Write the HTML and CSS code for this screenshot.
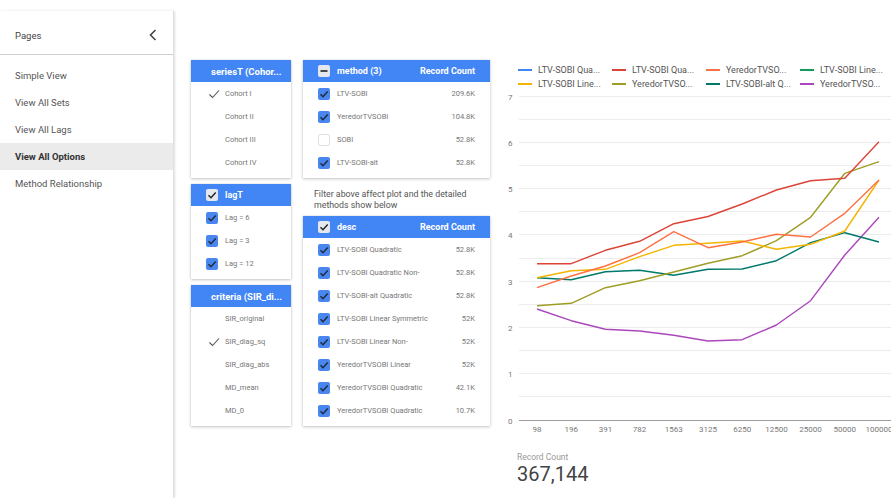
FILE: index.html
```html
<!DOCTYPE html>
<html lang="en">
<head>
<meta charset="utf-8">
<title>View All Options</title>
<link rel="stylesheet" href="styles.css">
</head>
<body>
<div class="page">
  <aside class="sidebar">
    <div class="side-head">
      <span>Pages</span>
      <svg class="chev" width="8" height="12" viewBox="0 0 8 12"><path d="M6.5 1 L1.5 6 L6.5 11" fill="none" stroke="#444" stroke-width="1.6"/></svg>
    </div>
    <nav class="side-nav">
      <a class="nav-item">Simple View</a>
      <a class="nav-item">View All Sets</a>
      <a class="nav-item">View All Lags</a>
      <a class="nav-item active">View All Options</a>
      <a class="nav-item">Method Relationship</a>
    </nav>
  </aside>

  <main class="main">
    <div class="col col-a">
      <section class="panel">
        <header class="ph ph-title">seriesT (Cohor...</header>
        <ul class="rows">
          <li class="row"><span class="tick"><svg width="12" height="12" viewBox="0 0 12 12"><path d="M1.5 6.5 L4.5 9.5 L11 2.5" fill="none" stroke="#555" stroke-width="1.1"/></svg></span><span class="lbl">Cohort I</span></li>
          <li class="row"><span class="tick"></span><span class="lbl">Cohort II</span></li>
          <li class="row"><span class="tick"></span><span class="lbl">Cohort III</span></li>
          <li class="row"><span class="tick"></span><span class="lbl">Cohort IV</span></li>
        </ul>
      </section>

      <section class="panel">
        <header class="ph"><span class="cb cb-head"><svg width="12" height="12" viewBox="0 0 12 12"><path d="M2.5 6.2 L5 8.7 L9.7 3.5" fill="none" stroke="#222" stroke-width="1.4"/></svg></span><span class="ph-text">lagT</span></header>
        <ul class="rows">
          <li class="row"><span class="cb on"><svg width="12" height="12" viewBox="0 0 12 12"><path d="M2.5 6.2 L5 8.7 L9.7 3.5" fill="none" stroke="#1f2a36" stroke-width="1.4"/></svg></span><span class="lbl">Lag = 6</span></li>
          <li class="row"><span class="cb on"><svg width="12" height="12" viewBox="0 0 12 12"><path d="M2.5 6.2 L5 8.7 L9.7 3.5" fill="none" stroke="#1f2a36" stroke-width="1.4"/></svg></span><span class="lbl">Lag = 3</span></li>
          <li class="row"><span class="cb on"><svg width="12" height="12" viewBox="0 0 12 12"><path d="M2.5 6.2 L5 8.7 L9.7 3.5" fill="none" stroke="#1f2a36" stroke-width="1.4"/></svg></span><span class="lbl">Lag = 12</span></li>
        </ul>
      </section>

      <section class="panel">
        <header class="ph ph-title">criteria (SIR_di...</header>
        <ul class="rows">
          <li class="row"><span class="tick"></span><span class="lbl">SIR_original</span></li>
          <li class="row"><span class="tick"><svg width="12" height="12" viewBox="0 0 12 12"><path d="M1.5 6.5 L4.5 9.5 L11 2.5" fill="none" stroke="#555" stroke-width="1.1"/></svg></span><span class="lbl">SIR_diag_sq</span></li>
          <li class="row"><span class="tick"></span><span class="lbl">SIR_diag_abs</span></li>
          <li class="row"><span class="tick"></span><span class="lbl">MD_mean</span></li>
          <li class="row"><span class="tick"></span><span class="lbl">MD_0</span></li>
        </ul>
      </section>
    </div>

    <div class="col col-b">
      <section class="panel">
        <header class="ph"><span class="cb cb-head"><svg width="12" height="12" viewBox="0 0 12 12"><path d="M2.5 6 H9.5" fill="none" stroke="#222" stroke-width="1.6"/></svg></span><span class="ph-text">method (3)</span><span class="ph-count">Record Count</span></header>
        <ul class="rows">
          <li class="row"><span class="cb on"><svg width="12" height="12" viewBox="0 0 12 12"><path d="M2.5 6.2 L5 8.7 L9.7 3.5" fill="none" stroke="#1f2a36" stroke-width="1.4"/></svg></span><span class="lbl">LTV-SOBI</span><span class="num">209.6K</span></li>
          <li class="row"><span class="cb on"><svg width="12" height="12" viewBox="0 0 12 12"><path d="M2.5 6.2 L5 8.7 L9.7 3.5" fill="none" stroke="#1f2a36" stroke-width="1.4"/></svg></span><span class="lbl">YeredorTVSOBI</span><span class="num">104.8K</span></li>
          <li class="row"><span class="cb off"></span><span class="lbl">SOBI</span><span class="num">52.8K</span></li>
          <li class="row"><span class="cb on"><svg width="12" height="12" viewBox="0 0 12 12"><path d="M2.5 6.2 L5 8.7 L9.7 3.5" fill="none" stroke="#1f2a36" stroke-width="1.4"/></svg></span><span class="lbl">LTV-SOBI-alt</span><span class="num">52.8K</span></li>
        </ul>
      </section>

      <p class="note">Filter above affect plot and the detailed methods show below</p>

      <section class="panel">
        <header class="ph"><span class="cb cb-head"><svg width="12" height="12" viewBox="0 0 12 12"><path d="M2.5 6.2 L5 8.7 L9.7 3.5" fill="none" stroke="#222" stroke-width="1.4"/></svg></span><span class="ph-text">desc</span><span class="ph-count">Record Count</span></header>
        <ul class="rows">
          <li class="row"><span class="cb on"><svg width="12" height="12" viewBox="0 0 12 12"><path d="M2.5 6.2 L5 8.7 L9.7 3.5" fill="none" stroke="#1f2a36" stroke-width="1.4"/></svg></span><span class="lbl">LTV-SOBI Quadratic</span><span class="num">52.8K</span></li>
          <li class="row"><span class="cb on"><svg width="12" height="12" viewBox="0 0 12 12"><path d="M2.5 6.2 L5 8.7 L9.7 3.5" fill="none" stroke="#1f2a36" stroke-width="1.4"/></svg></span><span class="lbl">LTV-SOBI Quadratic Non-</span><span class="num">52.8K</span></li>
          <li class="row"><span class="cb on"><svg width="12" height="12" viewBox="0 0 12 12"><path d="M2.5 6.2 L5 8.7 L9.7 3.5" fill="none" stroke="#1f2a36" stroke-width="1.4"/></svg></span><span class="lbl">LTV-SOBI-alt Quadratic</span><span class="num">52.8K</span></li>
          <li class="row"><span class="cb on"><svg width="12" height="12" viewBox="0 0 12 12"><path d="M2.5 6.2 L5 8.7 L9.7 3.5" fill="none" stroke="#1f2a36" stroke-width="1.4"/></svg></span><span class="lbl">LTV-SOBI Linear Symmetric</span><span class="num">52K</span></li>
          <li class="row"><span class="cb on"><svg width="12" height="12" viewBox="0 0 12 12"><path d="M2.5 6.2 L5 8.7 L9.7 3.5" fill="none" stroke="#1f2a36" stroke-width="1.4"/></svg></span><span class="lbl">LTV-SOBI Linear Non-</span><span class="num">52K</span></li>
          <li class="row"><span class="cb on"><svg width="12" height="12" viewBox="0 0 12 12"><path d="M2.5 6.2 L5 8.7 L9.7 3.5" fill="none" stroke="#1f2a36" stroke-width="1.4"/></svg></span><span class="lbl">YeredorTVSOBI Linear</span><span class="num">52K</span></li>
          <li class="row"><span class="cb on"><svg width="12" height="12" viewBox="0 0 12 12"><path d="M2.5 6.2 L5 8.7 L9.7 3.5" fill="none" stroke="#1f2a36" stroke-width="1.4"/></svg></span><span class="lbl">YeredorTVSOBI Quadratic</span><span class="num">42.1K</span></li>
          <li class="row"><span class="cb on"><svg width="12" height="12" viewBox="0 0 12 12"><path d="M2.5 6.2 L5 8.7 L9.7 3.5" fill="none" stroke="#1f2a36" stroke-width="1.4"/></svg></span><span class="lbl">YeredorTVSOBI Quadratic</span><span class="num">10.7K</span></li>
        </ul>
      </section>
    </div>

    <div class="col col-chart">
      <ul class="legend">
        <li><i class="sw c-blue"></i>LTV-SOBI Qua...</li>
        <li><i class="sw c-red"></i>LTV-SOBI Qua...</li>
        <li><i class="sw c-orange"></i>YeredorTVSO...</li>
        <li><i class="sw c-green"></i>LTV-SOBI Line...</li>
        <li><i class="sw c-yellow"></i>LTV-SOBI Line...</li>
        <li><i class="sw c-olive"></i>YeredorTVSO...</li>
        <li><i class="sw c-teal"></i>LTV-SOBI-alt Q...</li>
        <li><i class="sw c-purple"></i>YeredorTVSO...</li>
      </ul>

      <svg class="plot" width="386" height="349" viewBox="0 0 386 349">
        <g class="grid" stroke="#ececec" stroke-width="1">
          <line x1="14" x2="386" y1="5.5" y2="5.5"/>
          <line x1="14" x2="386" y1="28.5" y2="28.5"/>
          <line x1="14" x2="386" y1="51.5" y2="51.5"/>
          <line x1="14" x2="386" y1="74.5" y2="74.5"/>
          <line x1="14" x2="386" y1="97.5" y2="97.5"/>
          <line x1="14" x2="386" y1="120.5" y2="120.5"/>
          <line x1="14" x2="386" y1="143.5" y2="143.5"/>
          <line x1="14" x2="386" y1="167.5" y2="167.5"/>
          <line x1="14" x2="386" y1="190.5" y2="190.5"/>
          <line x1="14" x2="386" y1="213.5" y2="213.5"/>
          <line x1="14" x2="386" y1="236.5" y2="236.5"/>
          <line x1="14" x2="386" y1="259.5" y2="259.5"/>
          <line x1="14" x2="386" y1="282.5" y2="282.5"/>
          <line x1="14" x2="386" y1="305.5" y2="305.5"/>
        </g>
        <line x1="14" x2="386" y1="329.5" y2="329.5" stroke="#9e9e9e" stroke-width="1"/>
        <g class="ylab">
          <text x="3" y="8.5">7</text>
          <text x="3" y="54.5">6</text>
          <text x="3" y="100.5">5</text>
          <text x="3" y="146.5">4</text>
          <text x="3" y="193.5">3</text>
          <text x="3" y="239.5">2</text>
          <text x="3" y="285.5">1</text>
          <text x="3" y="332.5">0</text>
        </g>
        <g class="xlab" text-anchor="middle">
          <text x="32" y="341">98</text>
          <text x="66.2" y="341">196</text>
          <text x="100.4" y="341">391</text>
          <text x="134.6" y="341">782</text>
          <text x="168.8" y="341">1563</text>
          <text x="203" y="341">3125</text>
          <text x="237.2" y="341">6250</text>
          <text x="271.4" y="341">12500</text>
          <text x="305.6" y="341">25000</text>
          <text x="339.8" y="341">50000</text>
          <text x="374" y="341">100000</text>
        </g>
        <g fill="none" stroke-width="1.4" stroke-linejoin="round">
          <polyline stroke="#ab47bc" points="32,218 66.2,229.7 100.4,238.3 134.6,240 168.8,244.3 203,250 237.2,248.7 271.4,234 305.6,209.7 339.8,164 374,126.3"/>
          <polyline stroke="#00796b" points="32,186.7 66.2,188.7 100.4,180.7 134.6,179.3 168.8,184.3 203,178.3 237.2,178 271.4,169.7 305.6,151.7 339.8,141.7 374,151"/>
          <polyline stroke="#9e9d24" points="32,214.7 66.2,212.3 100.4,196.7 134.6,189.7 168.8,181 203,172.3 237.2,164.7 271.4,149.7 305.6,126.3 339.8,82.3 374,70.7"/>
          <polyline stroke="#f4b400" points="32,186.7 66.2,179.7 100.4,178.3 134.6,165.7 168.8,154.3 203,152.3 237.2,150 271.4,158.3 305.6,153.3 339.8,140 374,89"/>
          <polyline stroke="#ff7043" points="32,196.7 66.2,185 100.4,175 134.6,161.7 168.8,140.7 203,156.7 237.2,151 271.4,143.3 305.6,146 339.8,122.3 374,89"/>
          <polyline stroke="#db4437" points="32,172.7 66.2,172.7 100.4,159.3 134.6,150.3 168.8,132.7 203,125.5 237.2,113 271.4,99 305.6,89.7 339.8,87.3 374,50.7"/>
        </g>
      </svg>

      <div class="scorecard">
        <div class="sc-label">Record Count</div>
        <div class="sc-value">367,144</div>
      </div>
    </div>
  </main>
</div>
</body>
</html>
```

FILE: styles.css
```css
* {
  box-sizing: border-box;
  margin: 0;
  padding: 0;
}

html,
body {
  width: 891px;
  height: 498px;
  overflow: hidden;
  background: #fff;
}

body {
  font-family: Roboto, "Noto Sans", "Liberation Sans", sans-serif;
  color: #444;
}

ul {
  list-style: none;
}

.page {
  display: flex;
  height: 498px;
}

/* ---------- sidebar ---------- */
.sidebar {
  flex: none;
  width: 174px;
  margin-top: 11px;
  border-right: 1px solid #e0e0e0;
  box-shadow: 1px 0 2px rgba(0, 0, 0, 0.12);
}

.side-head {
  height: 44px;
  padding: 5px 16px 0 15px;
  display: flex;
  align-items: center;
  justify-content: space-between;
  border-bottom: 1px solid #cfcfcf;
  font-size: 9.5px;
  color: #444;
}

.chev {
  display: block;
}

.side-nav {
  padding-top: 7px;
}

.nav-item {
  display: block;
  height: 27px;
  line-height: 27px;
  padding-left: 15px;
  font-size: 9.5px;
  color: #555;
}

.nav-item.active {
  background: #ebebeb;
  color: #333;
  font-weight: 700;
}

/* ---------- main area ---------- */
.main {
  display: flex;
  align-items: flex-start;
  padding: 60px 0 0 17px;
  flex: 1;
  min-width: 0;
}

.col {
  flex: none;
  display: flex;
  flex-direction: column;
}

.col-a {
  width: 100px;
  gap: 6px;
}

.col-b {
  width: 187px;
  margin-left: 12px;
}

.col-chart {
  width: 386px;
  margin-left: 15px;
}

/* ---------- filter panels ---------- */
.panel {
  background: #fff;
  box-shadow: 0 1px 3px rgba(0, 0, 0, 0.22), 0 0 1px rgba(0, 0, 0, 0.18);
}

.ph {
  height: 22px;
  background: #4285f4;
  color: #fff;
  font-size: 9px;
  font-weight: 700;
  display: flex;
  align-items: center;
  padding: 0 15px;
  gap: 7px;
  white-space: nowrap;
}

.ph-title {
  padding-left: 20px;
  font-size: 9.5px;
}

.ph-count {
  margin-left: auto;
}

.rows {
  padding-bottom: 4px;
}

.row {
  height: 23px;
  display: flex;
  align-items: center;
  gap: 7px;
  padding: 0 15px;
  font-size: 7.5px;
  color: #777;
  white-space: nowrap;
}

.num {
  margin-left: auto;
}

.tick {
  flex: none;
  width: 12px;
  height: 12px;
  margin-left: 2px;
  margin-right: -2px;
}

.tick svg,
.cb svg {
  display: block;
}

.cb {
  flex: none;
  width: 12px;
  height: 12px;
  border-radius: 2px;
}

.cb.on {
  background: #4a86ef;
}

.cb.off {
  background: #fff;
  border: 1px solid #e3e3e3;
}

.cb-head {
  background: #e4e7ee;
}

.note {
  margin: 11px 0 5px;
  padding-left: 11px;
  font-size: 8.8px;
  line-height: 11px;
  color: #555;
}

/* ---------- chart ---------- */
.legend {
  display: grid;
  grid-template-columns: repeat(4, 94px);
  margin: 3px 0 0 13px;
}

.legend li {
  height: 14px;
  display: flex;
  align-items: center;
  gap: 6px;
  font-size: 9px;
  color: #555;
  white-space: nowrap;
}

.sw {
  flex: none;
  width: 14px;
  height: 2px;
}

.c-blue { background: #4285f4; }
.c-red { background: #db4437; }
.c-orange { background: #ff7043; }
.c-green { background: #0f9d58; }
.c-yellow { background: #f4b400; }
.c-olive { background: #9e9d24; }
.c-teal { background: #00796b; }
.c-purple { background: #ab47bc; }

.plot {
  display: block;
  overflow: hidden;
}

.ylab text,
.xlab text {
  font-family: Roboto, "Noto Sans", sans-serif;
  font-size: 8px;
  fill: #777;
}

.scorecard {
  margin: 11px 0 0 12px;
}

.sc-label {
  font-size: 8.5px;
  line-height: 12px;
  color: #999;
}

.sc-value {
  font-size: 20px;
  line-height: 22px;
  color: #444;
}
```
